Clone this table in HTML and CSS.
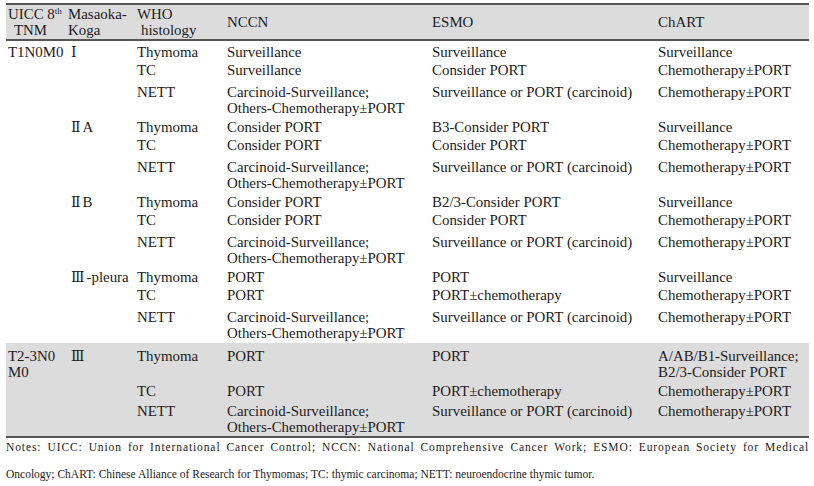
FILE: index.html
```html
<!DOCTYPE html>
<html lang="en">
<head>
<meta charset="utf-8">
<title>Postoperative radiotherapy recommendations</title>
<link rel="stylesheet" href="styles.css">
</head>
<body>
<table class="rec">
  <colgroup>
    <col class="c1"><col class="c2"><col class="c3"><col class="c4"><col class="c5"><col class="c6">
  </colgroup>
  <thead>
    <tr>
      <th>UICC 8<sup>th</sup><br><span class="ind">TNM</span></th>
      <th>Masaoka-<br>Koga</th>
      <th>WHO<br><span class="ind2">histology</span></th>
      <th>NCCN</th>
      <th>ESMO</th>
      <th>ChART</th>
    </tr>
  </thead>
  <tbody>
    <tr class="r-first">
      <td rowspan="12">T1N0M0</td>
      <td rowspan="3"><span class="rn">Ⅰ</span></td>
      <td>Thymoma</td><td>Surveillance</td><td>Surveillance</td><td>Surveillance</td>
    </tr>
    <tr class="r-mid">
      <td>TC</td><td>Surveillance</td><td>Consider PORT</td><td>Chemotherapy±PORT</td>
    </tr>
    <tr class="r-last">
      <td>NETT</td><td>Carcinoid-Surveillance;<br>Others-Chemotherapy±PORT</td><td>Surveillance or PORT (carcinoid)</td><td>Chemotherapy±PORT</td>
    </tr>

    <tr class="r-first">
      <td rowspan="3"><span class="rn">Ⅱ</span>A</td>
      <td>Thymoma</td><td>Consider PORT</td><td>B3-Consider PORT</td><td>Surveillance</td>
    </tr>
    <tr class="r-mid">
      <td>TC</td><td>Consider PORT</td><td>Consider PORT</td><td>Chemotherapy±PORT</td>
    </tr>
    <tr class="r-last">
      <td>NETT</td><td>Carcinoid-Surveillance;<br>Others-Chemotherapy±PORT</td><td>Surveillance or PORT (carcinoid)</td><td>Chemotherapy±PORT</td>
    </tr>

    <tr class="r-first">
      <td rowspan="3"><span class="rn">Ⅱ</span>B</td>
      <td>Thymoma</td><td>Consider PORT</td><td>B2/3-Consider PORT</td><td>Surveillance</td>
    </tr>
    <tr class="r-mid">
      <td>TC</td><td>Consider PORT</td><td>Consider PORT</td><td>Chemotherapy±PORT</td>
    </tr>
    <tr class="r-last">
      <td>NETT</td><td>Carcinoid-Surveillance;<br>Others-Chemotherapy±PORT</td><td>Surveillance or PORT (carcinoid)</td><td>Chemotherapy±PORT</td>
    </tr>

    <tr class="r-first">
      <td rowspan="3"><span class="rn">Ⅲ</span>-pleura</td>
      <td>Thymoma</td><td>PORT</td><td>PORT</td><td>Surveillance</td>
    </tr>
    <tr class="r-mid">
      <td>TC</td><td>PORT</td><td>PORT±chemotherapy</td><td>Chemotherapy±PORT</td>
    </tr>
    <tr class="r-last r-end">
      <td>NETT</td><td>Carcinoid-Surveillance;<br>Others-Chemotherapy±PORT</td><td>Surveillance or PORT (carcinoid)</td><td>Chemotherapy±PORT</td>
    </tr>
  </tbody>
  <tbody class="shade">
    <tr class="s-first">
      <td rowspan="3">T2-3N0<br>M0</td>
      <td rowspan="3"><span class="rn">Ⅲ</span></td>
      <td>Thymoma</td><td>PORT</td><td>PORT</td><td>A/AB/B1-Surveillance;<br>B2/3-Consider PORT</td>
    </tr>
    <tr class="s-mid">
      <td>TC</td><td>PORT</td><td>PORT±chemotherapy</td><td>Chemotherapy±PORT</td>
    </tr>
    <tr class="s-last">
      <td>NETT</td><td>Carcinoid-Surveillance;<br>Others-Chemotherapy±PORT</td><td>Surveillance or PORT (carcinoid)</td><td>Chemotherapy±PORT</td>
    </tr>
  </tbody>
</table>
<p class="notes">
  <span class="notes-l1">Notes: UICC: Union for International Cancer Control; NCCN: National Comprehensive Cancer Work; ESMO: European Society for Medical</span>
  <span class="notes-l2">Oncology; ChART: Chinese Alliance of Research for Thymomas; TC: thymic carcinoma; NETT: neuroendocrine thymic tumor.</span>
</p>
</body>
</html>
```

FILE: styles.css
```css
html, body {
  margin: 0;
  padding: 0;
  background: #ffffff;
}

body {
  font-family: "Liberation Serif", "Times New Roman", serif;
  color: #1e1b1c;
  width: 814px;
  height: 486px;
  overflow: hidden;
}

.rec {
  margin: 3px 0 0 6px;
  width: 803px;
  border-collapse: collapse;
  table-layout: fixed;
  font-size: 14.9px;
  line-height: 16px;
}

.c1 { width: 60px; }
.c2 { width: 69px; }
.c3 { width: 90px; }
.c4 { width: 205px; }
.c5 { width: 226px; }
.c6 { width: 153px; }

.rec thead tr {
  background: #dcdcdc;
  border-top: 2px solid #555555;
  border-bottom: 2px solid #555555;
}

.rec th {
  font-weight: normal;
  text-align: left;
  vertical-align: middle;
  padding: 1px 2px 1px 2px;
  white-space: nowrap;
}

.rec th sup {
  font-size: 9px;
  line-height: 0;
  vertical-align: 5px;
}

.ind { padding-left: 6px; }
.ind2 { padding-left: 4px; }

.rec td {
  text-align: left;
  vertical-align: top;
  padding: 1px 2px 1px 2px;
  white-space: nowrap;
}

.rec tr.r-first td { padding-top: 3px; }
.rec tr.r-mid td { padding-bottom: 5px; }
.rec tr.r-last td { padding-bottom: 0; }
.rec tr.r-end td { padding-bottom: 2px; }

.rn {
  font-family: "DejaVu Serif", "Noto Sans CJK SC", serif;
  font-size: 14px;
  margin-left: 3px;
  margin-right: 2px;
}

.shade {
  background: #dcdcdc;
  border-bottom: 2px solid #555555;
}

.shade tr.s-first td { padding-top: 5px; padding-bottom: 1px; }
.shade tr.s-mid td { padding-top: 2px; padding-bottom: 3px; }
.shade tr.s-last td { padding-top: 1px; padding-bottom: 1px; }

.notes {
  margin: -4px 0 0 6px;
  width: 803px;
  font-size: 11.5px;
  line-height: 27px;
}

.notes-l1 {
  display: block;
  text-align: justify;
  text-align-last: justify;
  letter-spacing: 0.9px;
}

.notes-l2 {
  display: block;
  text-align: left;
}
```
